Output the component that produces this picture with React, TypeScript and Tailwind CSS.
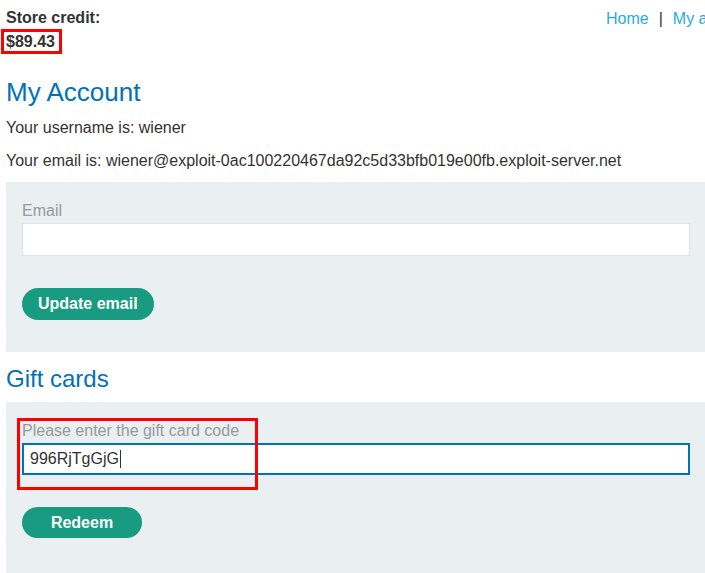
import React from 'react';

export default function App() {
  return (
    <div className="w-[705px] min-h-[573px] overflow-hidden bg-white text-[16px] text-[#333] font-['Liberation_Sans',Arial,sans-serif]">
      {/* Header */}
      <header className="flex pt-[7px] pl-[6px]">
        <div className="flex-1">
          <div className="font-bold leading-[22px]">Store credit:</div>
          <span className="inline-block -ml-[5px] pl-[2px] pr-[4px] border-[3px] border-[#ff0000] font-bold leading-[19px]">$89.43</span>
        </div>
        <nav className="w-[99px] shrink-0 whitespace-nowrap pt-px leading-[22px] text-[#29abe0]">
          <a href="#">Home</a>
          <span className="mx-[10px] text-[#333]">|</span>
          <a href="#">My account</a>
        </nav>
      </header>

      <main className="pl-[6px]">
        <h1 className="mt-[22px] text-[26px] leading-[32px] text-[#0071bc]">My Account</h1>
        <p className="mt-[9px] leading-[22px]">Your username is: wiener</p>
        <p className="mt-[11px] leading-[22px]">Your email is: wiener@exploit-0ac100220467da92c5d33bfb019e00fb.exploit-server.net</p>

        {/* Email form */}
        <section className="mt-[10px] w-[700px] bg-[#eaeff2] px-[16px] pt-[18px] pb-[32px]">
          <label className="block leading-[22px] text-[#999]">Email</label>
          <input className="mt-px block h-[33px] w-full border border-[#dfe3e6] bg-white px-[6px] outline-none" />
          <button className="mt-[32px] h-[32px] rounded-full bg-[#189b80] px-4 font-bold text-white">Update email</button>
        </section>

        <h2 className="mt-[12px] text-[24px] leading-[30px] text-[#0071bc]">Gift cards</h2>

        {/* Gift card form */}
        <section className="relative mt-[8px] w-[700px] bg-[#eaeff2] px-[16px] pt-[18px] pb-[40px]">
          <label className="block leading-[22px] text-[#999]">Please enter the gift card code</label>
          <div className="mt-px flex h-[32px] w-full items-center border-2 border-[#0071bc] bg-white pl-[6px]">
            <span>996RjTgGjG</span>
            <span className="ml-px h-[18px] w-px bg-[#333]"></span>
          </div>
          <button className="mt-[32px] h-[31px] min-w-[120px] rounded-full bg-[#189b80] px-4 font-bold text-white">Redeem</button>
          {/* annotation box */}
          <div className="absolute left-[11px] top-[16px] h-[72px] w-[241px] border-[3px] border-[#ff0000]"></div>
        </section>
      </main>
    </div>
  );
}
